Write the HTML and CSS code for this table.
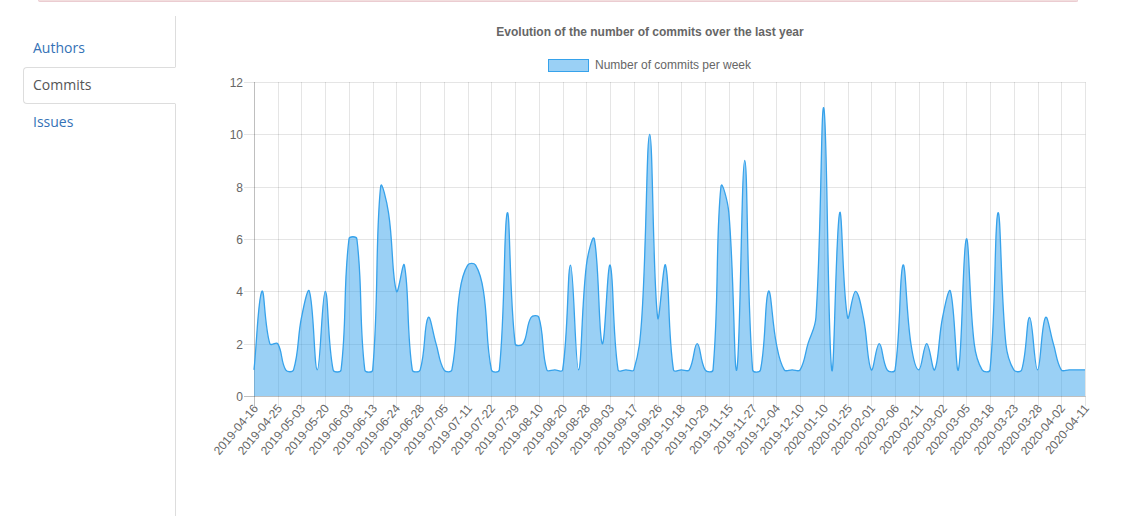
FILE: index.html
```html
<!DOCTYPE html>
<html lang="en">
<head>
<meta charset="utf-8">
<title>Commits</title>
<link rel="stylesheet" href="styles.css">
</head>
<body>
<div class="alert-edge"></div>
<div class="page">
  <nav class="sidebar">
    <ul class="tabs">
      <li><a href="#">Authors</a></li>
      <li class="active"><a href="#">Commits</a></li>
      <li><a href="#">Issues</a></li>
    </ul>
  </nav>
  <main class="chart">
    <svg id="chart" class="chart-svg" width="910" height="500" viewBox="190 16 910 500" xmlns="http://www.w3.org/2000/svg">
      <text class="chart-title" x="650" y="36">Evolution of the number of commits over the last year</text>
      <rect class="legend-box" x="548.5" y="59.5" width="40" height="12"></rect>
      <text class="legend-text" x="595" y="69">Number of commits per week</text>
      <g id="grid"></g>
      <g id="series"></g>
      <g id="ylabels"></g>
      <g id="xlabels"></g>
    </svg>
  </main>
</div>
<script src="script.js"></script>
</body>
</html>
```

FILE: styles.css
```css
html, body {
  margin: 0;
  padding: 0;
  background: #fff;
  overflow: hidden;
}
body {
  font-family: "Open Sans", "Liberation Sans", Arial, sans-serif;
  font-size: 14px;
  line-height: 20px;
  color: #333;
}
.alert-edge {
  margin: 0 62px 0 38px;
  height: 1px;
  background: #f2dede;
  border: 1px solid #ebccd1;
  border-top: none;
  border-radius: 0 0 4px 4px;
}
.page {
  display: flex;
  height: 514px;
  padding-top: 14px;
  box-sizing: border-box;
}
.sidebar {
  margin-left: 23px;
  width: 152px;
  border-right: 1px solid #ddd;
  padding-top: 14px;
  flex: none;
}
.tabs {
  list-style: none;
  margin: 0;
  padding: 0;
}
.tabs li {
  margin-right: -1px;
}
.tabs a {
  display: block;
  padding: 7px 10px 8px 9px;
  border: 1px solid transparent;
  border-right: none;
  border-radius: 4px 0 0 4px;
  color: #3572b6;
  text-decoration: none;
}
.tabs li.active a {
  color: #555;
  background: #fff;
  border-color: #ddd;
  border-right: 1px solid #fff;
}
.chart {
  margin-left: 14px;
  flex: none;
}
.chart-svg {
  display: block;
}
.chart-title {
  font: bold 12px "Liberation Sans", Arial, sans-serif;
  fill: #666;
  text-anchor: middle;
}
.legend-text,
.tick-label {
  font: 12px "Liberation Sans", Arial, sans-serif;
  fill: #666;
}
.legend-box {
  fill: rgba(54, 162, 235, 0.5);
  stroke: #36a2eb;
  stroke-width: 1;
}
.y-label {
  text-anchor: end;
}
.x-label {
  text-anchor: end;
}
.grid-line {
  stroke: rgba(0, 0, 0, 0.1);
  stroke-width: 1;
  fill: none;
}
.zero-line {
  stroke: rgba(0, 0, 0, 0.25);
}
.area {
  fill: rgba(54, 162, 235, 0.5);
  stroke: none;
}
.line {
  fill: none;
  stroke: #36a2eb;
  stroke-width: 1.3;
}
```

FILE: script.js
```js
(function () {
  var data = [
    1, 4, 2, 2, 1, 1, 3, 4, 1, 4,
    1, 1, 6, 6, 1, 1, 8, 7, 4, 5,
    1, 1, 3, 2, 1, 1, 4, 5, 5, 4,
    1, 1, 7, 2, 2, 3, 3, 1, 1, 1,
    5, 1, 5, 6, 2, 5, 1, 1, 1, 3,
    10, 3, 5, 1, 1, 1, 2, 1, 1, 8,
    7, 1, 9, 1, 1, 4, 2, 1, 1, 1,
    2, 3, 11, 1, 7, 3, 4, 3, 1, 2,
    1, 1, 5, 2, 1, 2, 1, 3, 4, 1,
    6, 2, 1, 1, 7, 2, 1, 1, 3, 1,
    3, 2, 1, 1, 1, 1
  ];
  var labels = [
    "2019-04-16", "2019-04-25", "2019-05-03", "2019-05-20", "2019-06-03", "2019-06-13",
    "2019-06-24", "2019-06-28", "2019-07-05", "2019-07-11", "2019-07-22", "2019-07-29",
    "2019-08-10", "2019-08-20", "2019-08-28", "2019-09-03", "2019-09-17", "2019-09-26",
    "2019-10-18", "2019-10-29", "2019-11-15", "2019-11-27", "2019-12-04", "2019-12-10",
    "2020-01-10", "2020-01-25", "2020-02-01", "2020-02-06", "2020-02-11", "2020-03-02",
    "2020-03-05", "2020-03-18", "2020-03-23", "2020-03-28", "2020-04-02", "2020-04-11"
  ];
  var NS = "http://www.w3.org/2000/svg";
  var L = 254, R = 1085, T = 82, B = 396, MAX = 12;
  var n = data.length;
  var step = (R - L) / (n - 1);
  function yv(v) { return B - (B - T) * v / MAX; }
  function el(name, attrs, parent, text) {
    var e = document.createElementNS(NS, name);
    for (var k in attrs) e.setAttribute(k, attrs[k]);
    if (text) e.textContent = text;
    parent.appendChild(e);
    return e;
  }
  var grid = document.getElementById("grid");
  var series = document.getElementById("series");
  var ylab = document.getElementById("ylabels");
  var xlab = document.getElementById("xlabels");

  for (var v = 0; v <= MAX; v += 2) {
    var y = Math.round(yv(v)) + 0.5;
    el("line", { x1: 244, y1: y, x2: R + 0.5, y2: y, "class": "grid-line" + (v === 0 ? " zero-line" : "") }, grid);
    el("text", { x: 243, y: y, dy: "0.35em", "class": "tick-label y-label" }, ylab, String(v));
  }
  for (var k = 0; k < labels.length; k++) {
    var xi = L + k * 3 * step;
    var x = Math.round(xi) + 0.5;
    el("line", { x1: x, y1: T, x2: x, y2: B + 10, "class": "grid-line" + (k === 0 ? " zero-line" : "") }, grid);
    el("text", { transform: "translate(" + (x + 1) + "," + (B + 10) + ") rotate(-50)", dy: "0.35em", "class": "tick-label x-label" }, xlab, labels[k]);
  }

  var pts = data.map(function (val, i) { return { x: L + i * step, y: yv(val) }; });
  var t = 0.4;
  function clamp(a, lo, hi) { return Math.max(lo, Math.min(hi, a)); }
  pts.forEach(function (p, i) {
    var prev = pts[i - 1] || p, next = pts[i + 1] || p;
    var d01 = Math.hypot(p.x - prev.x, p.y - prev.y);
    var d12 = Math.hypot(next.x - p.x, next.y - p.y);
    var s01 = d01 / (d01 + d12), s12 = d12 / (d01 + d12);
    if (!isFinite(s01)) s01 = 0;
    if (!isFinite(s12)) s12 = 0;
    var fa = t * s01, fb = t * s12;
    p.c1x = clamp(p.x - fa * (next.x - prev.x), L, R);
    p.c1y = clamp(p.y - fa * (next.y - prev.y), T, B);
    p.c2x = clamp(p.x + fb * (next.x - prev.x), L, R);
    p.c2y = clamp(p.y + fb * (next.y - prev.y), T, B);
  });
  function f(a) { return a.toFixed(2); }
  var d = "M" + f(pts[0].x) + " " + f(pts[0].y);
  for (var i = 1; i < n; i++) {
    var a = pts[i - 1], b = pts[i];
    d += " C" + f(a.c2x) + " " + f(a.c2y) + " " + f(b.c1x) + " " + f(b.c1y) + " " + f(b.x) + " " + f(b.y);
  }
  var area = d + " L" + f(pts[n - 1].x) + " " + B + " L" + f(pts[0].x) + " " + B + " Z";
  el("path", { d: area, "class": "area" }, series);
  el("path", { d: d, "class": "line" }, series);
})();
```
